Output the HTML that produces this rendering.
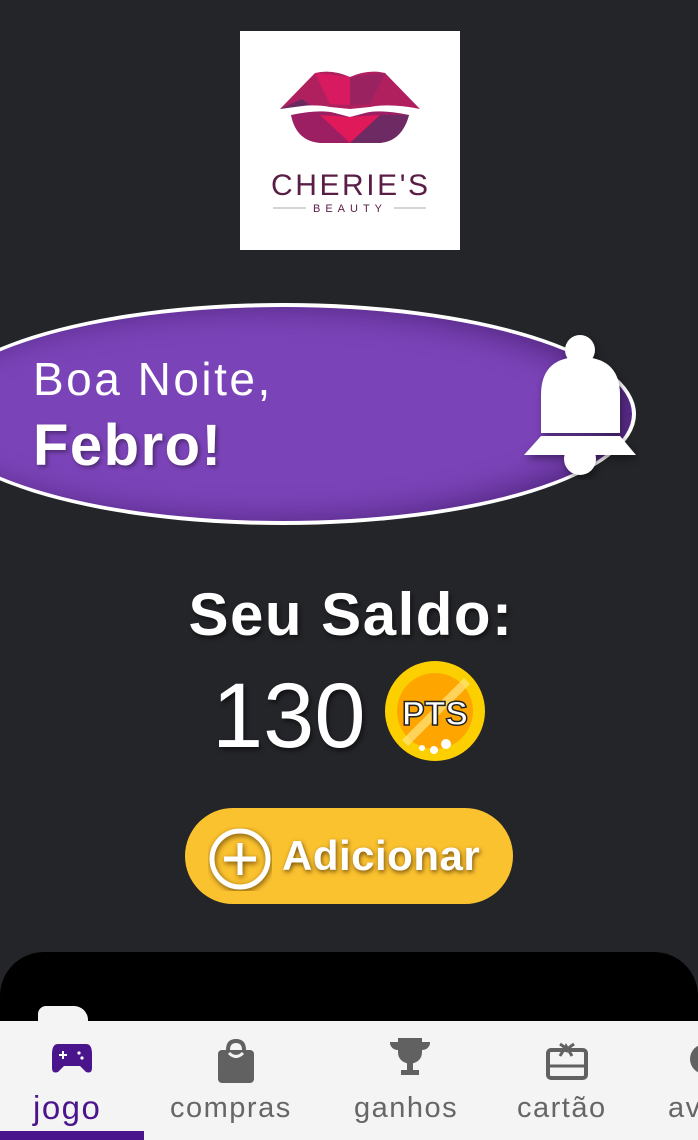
<!DOCTYPE html>
<html style="width:698px;height:1140px;overflow:hidden"><head><meta charset="utf-8"><style>
*{margin:0;padding:0;box-sizing:border-box}
body{width:698px;height:1140px;background:#242529;position:relative;overflow:hidden;font-family:"Liberation Sans",sans-serif;color:#fff}
.abs{position:absolute}
.logo{left:240px;top:31px;width:220px;height:219px;background:#fff}
.ell{left:-70px;top:303px;width:706px;height:222px;border-radius:50%;background:#7b43b8;border:4px solid #fff;box-shadow:inset -20px 0 30px rgba(40,10,70,.5)}
.t1{left:33px;top:352px;font-size:46px;letter-spacing:2.5px}
.t2{left:33px;top:412px;font-size:58px;font-weight:bold;letter-spacing:1.5px;text-shadow:2px 2px 4px rgba(0,0,0,.4)}
.saldo{left:0;width:698px;top:580px;text-align:center;font-size:60px;font-weight:bold;letter-spacing:1.5px;text-shadow:2px 3px 4px rgba(0,0,0,.5);padding-left:4px}
.num{left:212px;top:664px;font-size:92px;text-shadow:2px 3px 4px rgba(0,0,0,.5)}
.btn{left:185px;top:808px;width:328px;height:96px;border-radius:48px;background:#fbc22f}
.btxt{left:282px;top:832px;font-size:42px;font-weight:bold;letter-spacing:0.5px;text-shadow:1px 2px 5px rgba(80,50,0,.8)}
.card{left:0;top:952px;width:698px;height:188px;background:#000;border-radius:44px 44px 0 0}
.nav{left:0;top:1021px;width:698px;height:119px;background:#f4f4f4}
.lab{top:1092px;font-size:29px;color:#666;letter-spacing:1.5px}
</style></head><body>
<div class="abs logo">
<svg width="220" height="219" viewBox="0 0 220 219">
<path d="M40 78 L75 42 Q92 38 110 46 Q128 38 145 42 L180 78 Q150 72 130 76 L110 78 L90 76 Q70 72 40 78Z" fill="#b0205f"/>
<path d="M75 42 L110 46 L110 74 L90 73Z" fill="#d81b60"/>
<path d="M145 42 L110 46 L110 74 L130 73Z" fill="#9a2260"/>
<path d="M40 78 L62 68 L70 74Z" fill="#6a2a5e"/>
<path d="M51 84 Q80 78 95 82 L110 86 L125 82 Q140 78 169 84 Q162 110 140 112 L80 112 Q56 110 51 84Z" fill="#9c1f64"/>
<path d="M80 84 L110 86 L140 84 L110 112Z" fill="#e0195a"/>
<path d="M140 84 L169 84 Q162 110 140 112 L110 112Z" fill="#6e2a62"/>
<text x="110" y="164" text-anchor="middle" font-family="Liberation Sans" font-size="30" fill="#5a1d45" letter-spacing="1" textLength="158">CHERIE'S</text>
<line x1="33" y1="177" x2="66" y2="177" stroke="#aaa" stroke-width="1"/>
<line x1="154" y1="177" x2="186" y2="177" stroke="#aaa" stroke-width="1"/>
<text x="110" y="181" text-anchor="middle" font-family="Liberation Sans" font-size="11" fill="#5a1d45" letter-spacing="5">BEAUTY</text>
</svg></div>
<div class="abs ell"></div>
<div class="abs t1">Boa Noite,</div>
<div class="abs t2">Febro!</div>
<svg class="abs" style="left:520px;top:330px" width="120" height="150" viewBox="520 330 120 150">
<g fill="#fff" style="filter:drop-shadow(2px 4px 4px rgba(0,0,0,.4))">
<circle cx="580" cy="350" r="15"/>
<circle cx="580" cy="459" r="16"/>
<path d="M541 433 L541 395 Q541 357 580 357 Q620 357 620 395 L620 433Z"/>
<path d="M541 436 L620 436 L636 455 L524 455Z"/>
</g></svg>
<div class="abs saldo">Seu Saldo:</div>
<div class="abs num">130</div>
<svg class="abs" style="left:384px;top:660px" width="104" height="104" viewBox="0 0 104 104">
<circle cx="51" cy="51" r="50" fill="#fcd000"/>
<circle cx="51" cy="51" r="38" fill="#ffa500"/>
<path d="M80 18 L86 24 L24 86 L18 80Z" fill="#ffe680" opacity=".7"/>
<text x="51" y="65" text-anchor="middle" font-family="Liberation Sans" font-weight="bold" font-size="34" fill="#fff" stroke="#222" stroke-width="1.5">PTS</text>
<circle cx="38" cy="88" r="3" fill="#fff"/><circle cx="50" cy="90" r="4" fill="#fff"/><circle cx="62" cy="84" r="5" fill="#fff"/>
</svg>
<div class="abs btn"></div>
<svg class="abs" style="left:208px;top:827px" width="64" height="64" viewBox="0 0 64 64">
<g stroke="#fff" stroke-width="5" fill="none" style="filter:drop-shadow(1px 2px 3px rgba(80,50,0,.8))">
<circle cx="32" cy="32" r="28"/><path d="M32 16V48M16 32H48"/></g></svg>
<div class="abs btxt">Adicionar</div>
<div class="abs card"></div>
<div class="abs" style="left:38px;top:1006px;width:50px;height:20px;background:#f4f4f4;border-radius:8px 14px 0 0"></div>
<div class="abs nav"></div>
<div class="abs" style="left:0;top:1131px;width:144px;height:9px;background:#4a148c"></div>
<svg class="abs" style="left:50px;top:1040px" width="44" height="36" viewBox="0 0 44 36"><path d="M8 4 H36 Q42 4 42 14 L42 28 Q42 34 36 32 L30 26 H14 L8 32 Q2 34 2 28 L2 14 Q2 4 8 4Z" fill="#4a148c"/><path d="M13 11v8M9 15h8" stroke="#fff" stroke-width="2"/><circle cx="29" cy="13" r="1.6" fill="#fff"/><circle cx="32" cy="18" r="1.6" fill="#fff"/></svg>
<div class="abs lab" style="left:33px;color:#4a148c;font-size:33px;top:1089px">jogo</div>
<svg class="abs" style="left:216px;top:1038px" width="40" height="46" viewBox="0 0 40 46"><rect x="2" y="12" width="36" height="33" rx="4" fill="#616161"/><path d="M12 12 Q12 3 20 3 Q28 3 28 12 M12 14 Q20 24 28 14" stroke="#616161" stroke-width="4" fill="none"/><path d="M13 15 Q20 22 27 15" stroke="#f4f4f4" stroke-width="3" fill="none"/></svg>
<div class="abs lab" style="left:170px">compras</div>
<svg class="abs" style="left:388px;top:1036px" width="44" height="42" viewBox="0 0 44 42"><path d="M10 2H34V16Q34 26 22 28Q10 26 10 16Z M2 6H10V14Q4 14 2 8Z M42 6H34V14Q40 14 42 8Z M19 27H25V34H31V39H13V34H19Z" fill="#616161"/></svg>
<div class="abs lab" style="left:354px">ganhos</div>
<svg class="abs" style="left:546px;top:1040px" width="42" height="40" viewBox="0 0 42 40"><rect x="2" y="10" width="38" height="28" rx="3" fill="none" stroke="#616161" stroke-width="4"/><path d="M4 26H38" stroke="#616161" stroke-width="3"/><path d="M14 16 L20 6 L26 16 M14 4 Q20 8 21 10 Q22 8 28 4" stroke="#616161" stroke-width="3" fill="none"/></svg>
<div class="abs lab" style="left:517px">cartão</div>
<div class="abs" style="left:690px;top:1044px;width:30px;height:30px;border-radius:50%;background:#616161"></div>
<div class="abs lab" style="left:668px">av</div>
</body></html>
